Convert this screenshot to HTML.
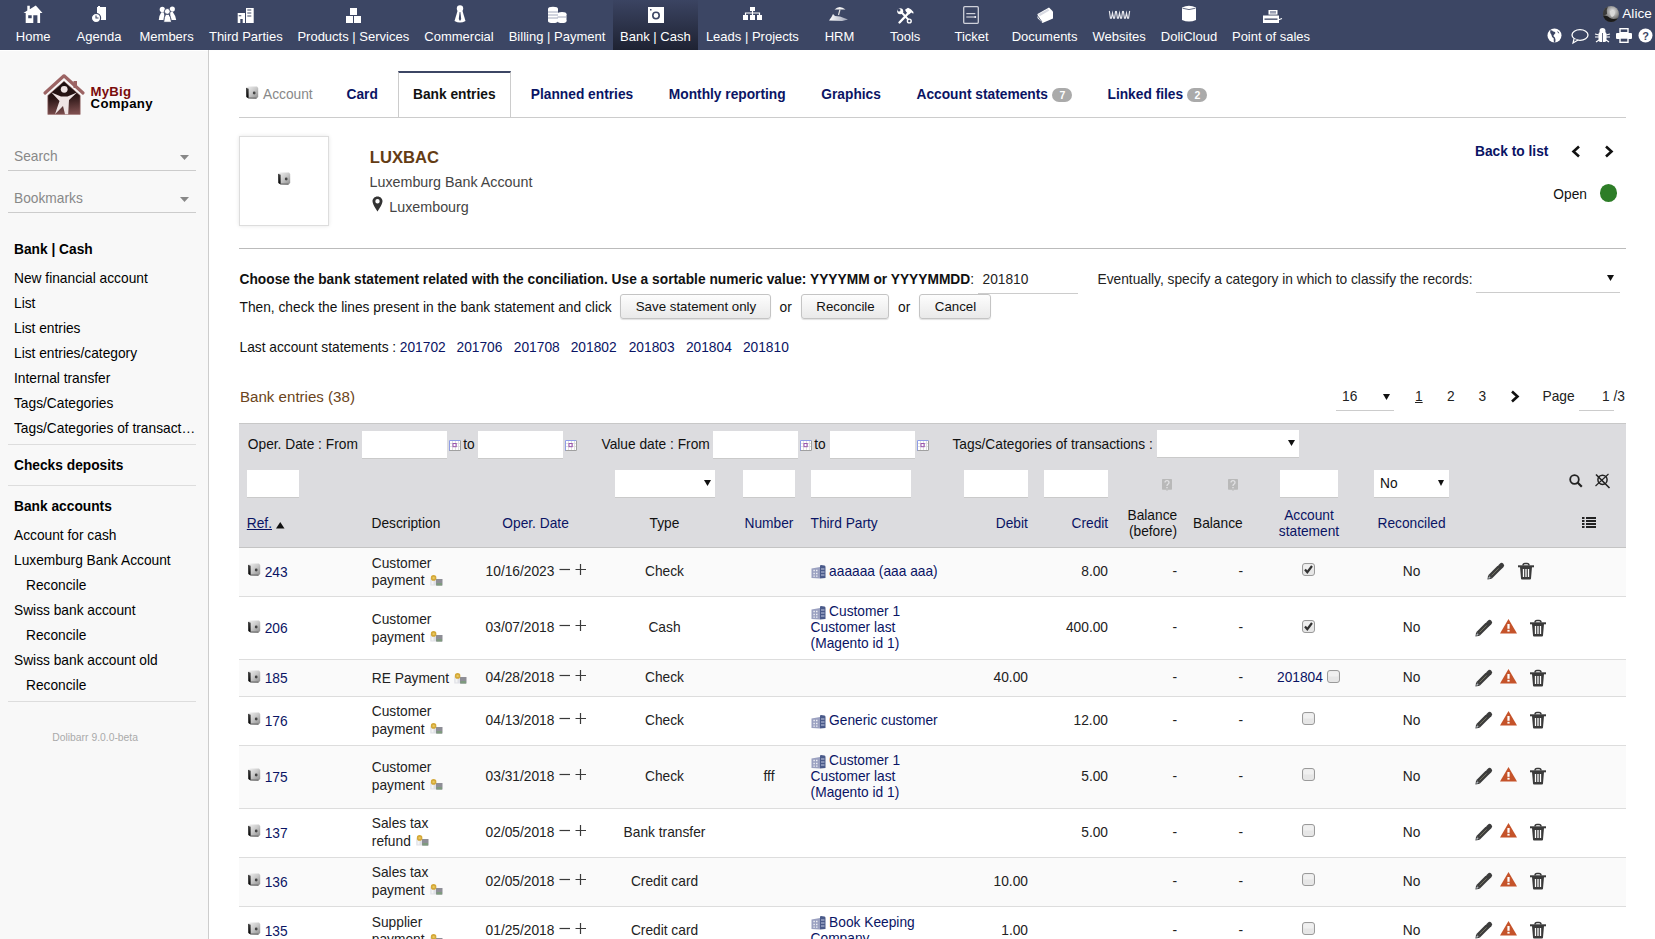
<!DOCTYPE html>
<html><head><meta charset="utf-8">
<style>
*{box-sizing:border-box}
html,body{margin:0;padding:0}
body{width:1655px;height:939px;overflow:hidden;position:relative;background:#fff;font-family:"Liberation Sans",sans-serif;font-size:13.76px;color:#222}
.a{position:absolute;white-space:nowrap;line-height:1}
svg.a{overflow:visible}
</style></head><body>

<div class="a" style="left:0px;top:0px;width:1655px;height:50px;background:#3c4664"></div>
<div class="a" style="left:613px;top:0px;width:85px;height:50px;background:linear-gradient(#3b4462,#1e2232)"></div>
<div class="a" style="left:-66.8px;width:200px;text-align:center;top:30.00px;font-size:13px;color:#fff">Home</div>
<div class="a" style="left:-1px;width:200px;text-align:center;top:30.00px;font-size:13px;color:#fff">Agenda</div>
<div class="a" style="left:66.6px;width:200px;text-align:center;top:30.00px;font-size:13px;color:#fff">Members</div>
<div class="a" style="left:145.8px;width:200px;text-align:center;top:30.00px;font-size:13px;color:#fff">Third Parties</div>
<div class="a" style="left:253.3px;width:200px;text-align:center;top:30.00px;font-size:13px;color:#fff">Products | Services</div>
<div class="a" style="left:359px;width:200px;text-align:center;top:30.00px;font-size:13px;color:#fff">Commercial</div>
<div class="a" style="left:457px;width:200px;text-align:center;top:30.00px;font-size:13px;color:#fff">Billing | Payment</div>
<div class="a" style="left:555.4px;width:200px;text-align:center;top:30.00px;font-size:13px;color:#fff">Bank | Cash</div>
<div class="a" style="left:652.4px;width:200px;text-align:center;top:30.00px;font-size:13px;color:#fff">Leads | Projects</div>
<div class="a" style="left:739.5px;width:200px;text-align:center;top:30.00px;font-size:13px;color:#fff">HRM</div>
<div class="a" style="left:805.2px;width:200px;text-align:center;top:30.00px;font-size:13px;color:#fff">Tools</div>
<div class="a" style="left:871.6px;width:200px;text-align:center;top:30.00px;font-size:13px;color:#fff">Ticket</div>
<div class="a" style="left:944.5999999999999px;width:200px;text-align:center;top:30.00px;font-size:13px;color:#fff">Documents</div>
<div class="a" style="left:1019.2px;width:200px;text-align:center;top:30.00px;font-size:13px;color:#fff">Websites</div>
<div class="a" style="left:1089px;width:200px;text-align:center;top:30.00px;font-size:13px;color:#fff">DoliCloud</div>
<div class="a" style="left:1171px;width:200px;text-align:center;top:30.00px;font-size:13px;color:#fff">Point of sales</div>
<svg class="a" style="left:23px;top:5px" width="20" height="19" viewBox="0 0 20 19"><path fill-rule="evenodd" fill="#fff" d="M0.5 8 L4.3 5.6 L4.3 0.8 L6.8 0.8 L6.8 4.2 L12.8 0.5 L19.5 8 L17.1 8 L17.1 18 L14.4 18 L14.4 10.3 L10.3 10.3 L10.3 18 L2.7 18 L2.7 8 Z M5.2 10.3 L8.7 10.3 L8.7 13.3 L5.2 13.3 Z"/></svg>
<svg class="a" style="left:91px;top:6px" width="16" height="17" viewBox="0 0 16 17"><rect x="6" y="1" width="9" height="13" fill="#fff"/><rect x="7" y="0" width="2" height="3" fill="#fff"/><circle cx="5" cy="12" r="4.6" fill="#fff" stroke="#3c4664" stroke-width="1.2"/><path d="M5 9.5 V12 H7.5" stroke="#3c4664" stroke-width="1.1" fill="none"/></svg>
<svg class="a" style="left:158px;top:6px" width="19" height="17" viewBox="0 0 19 17"><circle cx="4.3" cy="3.4" r="2.6" fill="#fff"/><path d="M0.8 14 Q1.3 9 3.3 6.3 L5.6 6.3 Q6.8 9 6.6 14 Z" fill="#fff"/><circle cx="14.3" cy="3.1" r="2.6" fill="#fff"/><path d="M12.2 6 L14.8 6 Q17.3 9 18.2 14 L12.3 14Z" fill="#fff"/><path d="M5.6 16.3 Q6 11 7.6 8.2 L11 8.2 Q12.8 11 13.6 16.3Z" fill="#fff" stroke="#3c4664" stroke-width="1"/><circle cx="9.3" cy="5.4" r="2.9" fill="#fff" stroke="#3c4664" stroke-width="0.9"/></svg>
<svg class="a" style="left:237px;top:7px" width="17" height="16" viewBox="0 0 17 16"><path fill-rule="evenodd" fill="#fff" d="M0.7 6 H8 V16 H5.7 V12 H3.3 V16 H0.7Z M1.7 8.3 H4.3 V9.3 H1.7Z"/><path fill-rule="evenodd" fill="#fff" d="M9 1 H16.7 V16 H9Z M10.3 2.5 H14.3 V3.5 H10.3Z M10.3 5.5 H14.3 V6.5 H10.3Z M10.3 8.5 H14.3 V9.5 H10.3Z"/></svg>
<svg class="a" style="left:345px;top:7px" width="18" height="17" viewBox="0 0 18 17"><rect x="5" y="1" width="7" height="7" fill="#fff"/><rect x="1" y="9" width="7" height="7" fill="#fff"/><rect x="9" y="9" width="7" height="7" fill="#fff"/></svg>
<svg class="a" style="left:454px;top:5px" width="12" height="18" viewBox="0 0 12 18"><circle cx="6" cy="3.5" r="3.2" fill="#fff"/><path d="M3.5 6 L8.5 6 L11.5 16 Q6 19 0.5 16 Z" fill="#fff"/><path d="M5.6 7 L6.4 7 L7.2 14 L6 16 L4.8 14Z" fill="#3c4664"/></svg>
<svg class="a" style="left:547px;top:6px" width="20" height="17" viewBox="0 0 20 17"><ellipse cx="6" cy="3" rx="5" ry="2.2" fill="#fff"/><rect x="1" y="3" width="10" height="12" fill="#fff"/><ellipse cx="6" cy="15" rx="5" ry="2" fill="#fff"/><ellipse cx="15" cy="8" rx="4.5" ry="2" fill="#fff"/><rect x="10.5" y="8" width="9" height="7" fill="#fff"/><ellipse cx="15" cy="15" rx="4.5" ry="2" fill="#fff"/><path d="M1 6H11M1 9H11M1 12H11M10.5 11H19.5" stroke="#8b93ab" stroke-width="0.8"/></svg>
<svg class="a" style="left:648px;top:7px" width="16" height="16" viewBox="0 0 16 16"><rect x="0" y="0" width="16" height="16" fill="#fff"/><circle cx="8" cy="8.5" r="3.2" fill="none" stroke="#3c4664" stroke-width="1.6"/><rect x="2" y="2" width="1.5" height="1.5" fill="#3c4664"/></svg>
<svg class="a" style="left:743px;top:7px" width="19" height="14" viewBox="0 0 19 14"><rect x="7" y="0" width="5" height="4" fill="#fff"/><rect x="0" y="8" width="5" height="5" fill="#fff"/><rect x="7" y="8" width="5" height="5" fill="#fff"/><rect x="14" y="8" width="5" height="5" fill="#fff"/><path d="M9.5 4 V8 M2.5 8 V6 H16.5 V8" stroke="#fff" stroke-width="1.2" fill="none"/></svg>
<svg class="a" style="left:829px;top:6px" width="20" height="15" viewBox="0 0 20 15"><defs><linearGradient id="hg" x1="0" y1="0" x2="1" y2="0"><stop offset="0" stop-color="#fff"/><stop offset="1" stop-color="#9aa0b4"/></linearGradient></defs><path d="M5.5 3.5 Q10.5 -1.5 16.5 3.5 Z" fill="#f4f4f4"/><path d="M11 3.5 L9.5 9" stroke="#e0e0e0" stroke-width="1.2"/><path d="M0 14.5 L2.5 11 L4 8 L6 10 L11 10.5 L19 13.5 L13 15 Z" fill="url(#hg)"/></svg>
<svg class="a" style="left:896px;top:7px" width="18" height="17" viewBox="0 0 18 17"><path d="M12.5 6 L3.5 15.5" stroke="#fff" stroke-width="2.4" stroke-linecap="round"/><path d="M9 2.8 L12 0.8 Q15 1.5 17.5 5 L17.3 6.8 L15.3 5.5 L13 7.6 L10.3 5 Z" fill="#fff"/><path d="M5.5 5.2 L12.3 12.6" stroke="#fff" stroke-width="2"/><circle cx="4.2" cy="4.2" r="3" fill="#fff"/><circle cx="3" cy="3" r="1.5" fill="#3c4664"/><path d="M1 1 L3.5 3.5" stroke="#3c4664" stroke-width="1.6"/><circle cx="13.3" cy="14" r="1.9" fill="none" stroke="#fff" stroke-width="1.4"/></svg>
<svg class="a" style="left:963px;top:6px" width="16" height="18" viewBox="0 0 16 18"><rect x="0.7" y="0.7" width="14.6" height="16.6" rx="1" fill="none" stroke="#cfd1da" stroke-width="1.3"/><rect x="3.3" y="7" width="9" height="1.2" fill="#cfd1da"/><rect x="3.3" y="10.4" width="9" height="1.2" fill="#cfd1da"/><rect x="11.5" y="10" width="1.6" height="2" fill="#e8e8ee"/></svg>
<svg class="a" style="left:1036px;top:6px" width="18" height="17" viewBox="0 0 18 17"><path d="M1.5 8 L13 1.5 L17 5.5 L17 12.5 L6.5 17 L1.5 12 Z" fill="#fff"/><path d="M2 8.5 L12 3 L13.5 4.5 L4 10Z" fill="#d8dae2"/><path d="M1 9 L6 16" stroke="#3c4664" stroke-width="0.8"/></svg>
<svg class="a" style="left:1109px;top:11px" width="21" height="7" viewBox="0 0 21 7"><path d="M0.5 0 L2 7 L3.5 7 L5 2 L6.5 7 L8 7 L9.5 0" fill="none" stroke="#e8e8ee" stroke-width="1.6" transform="scale(0.7,1)"/><g transform="translate(7,0)"><path d="M0.5 0 L2 7 L3.5 7 L5 2 L6.5 7 L8 7 L9.5 0" fill="none" stroke="#e8e8ee" stroke-width="1.6" transform="scale(0.7,1)"/></g><g transform="translate(14,0)"><path d="M0.5 0 L2 7 L3.5 7 L5 2 L6.5 7 L8 7 L9.5 0" fill="none" stroke="#e8e8ee" stroke-width="1.6" transform="scale(0.7,1)"/></g></svg>
<svg class="a" style="left:1182px;top:5px" width="14" height="17" viewBox="0 0 14 17"><path d="M0 2.5 Q7 -1 14 2.5 V15 Q7 18 0 15Z" fill="#fff"/><path d="M0.5 3.2 Q7 6 13.5 3.2" stroke="#3c4664" stroke-width="0.8" fill="none"/></svg>
<svg class="a" style="left:1262px;top:9px" width="21" height="15" viewBox="0 0 21 15"><rect x="6.5" y="1" width="9" height="4.6" fill="#fff"/><rect x="8" y="2" width="6" height="2.6" fill="#9aa0b4"/><rect x="1" y="6.5" width="16" height="7.5" fill="#fff"/><rect x="2.5" y="9.5" width="13" height="1.3" fill="#3c4664"/><path d="M16 11 L20 9.5" stroke="#fff" stroke-width="1.2"/></svg>
<svg class="a" style="left:1603px;top:6px" width="16" height="16" viewBox="0 0 16 16"><defs><clipPath id="av"><circle cx="8" cy="8" r="8"/></clipPath><radialGradient id="ag" cx="0.6" cy="0.35" r="0.6"><stop offset="0" stop-color="#f0f0f0"/><stop offset="0.5" stop-color="#a0a0a0"/><stop offset="1" stop-color="#505050"/></radialGradient></defs><g clip-path="url(#av)"><rect width="16" height="16" fill="url(#ag)"/><path d="M0 10 Q4 9 7 12 Q10 14 16 12 L16 16 L0 16Z" fill="#1a1a1a"/><path d="M0 0 L5 0 Q3 4 4 8 L0 10Z" fill="#3a3a3a"/><path d="M7 5 Q10 4 12 6 Q12 10 9 11 Q7 10 7 5Z" fill="#d8d8d8"/></g></svg>
<div class="a" style="left:1622.3px;top:6.74px;font-size:13.6px;font-weight:400;color:#fff;">Alice</div>
<svg class="a" style="left:1547px;top:28px" width="15" height="15" viewBox="0 0 15 15"><circle cx="7.5" cy="7.5" r="7" fill="#fff"/><path d="M3.2 2.2 Q5.5 2 6 3.5 Q8 3 8.5 5 Q7 6.5 6.3 8 Q8 9 8.4 11 Q8.8 13 8 14.5 L7 14.5 Q6.5 12 6.8 10.5 Q4.5 9 4.3 6.5 Q2.8 5 3.2 2.2Z" fill="#3c4664"/><path d="M10 3 Q12 3.5 12.3 5.5 Q11 5.5 10 3Z" fill="#3c4664"/></svg>
<svg class="a" style="left:1571px;top:29px" width="18" height="15" viewBox="0 0 18 15"><ellipse cx="9" cy="6" rx="8" ry="5.3" fill="none" stroke="#fff" stroke-width="1.3"/><path d="M3 10 L2 14 L7 11" fill="#3c4664" stroke="#fff" stroke-width="1.2"/></svg>
<svg class="a" style="left:1595px;top:28px" width="15" height="15" viewBox="0 0 15 15"><circle cx="7.5" cy="3" r="3" fill="#fff"/><rect x="3.5" y="4" width="8" height="10" rx="2" fill="#fff"/><path d="M0 6 L4 7 M15 6 L11 7 M0 9H4M11 9H15M1 14L4 12M14 14L11 12M7.5 5V14" stroke="#fff" stroke-width="1.2"/><path d="M7.5 5V14" stroke="#3c4664" stroke-width="0.8"/></svg>
<svg class="a" style="left:1616px;top:28px" width="16" height="15" viewBox="0 0 16 15"><rect x="4" y="0.7" width="8" height="4" fill="none" stroke="#fff" stroke-width="1.4"/><rect x="0" y="5" width="16" height="6" rx="1" fill="#fff"/><rect x="4" y="10" width="8" height="4.3" fill="#3c4664" stroke="#fff" stroke-width="1.4"/></svg>
<svg class="a" style="left:1638px;top:28px" width="15" height="15" viewBox="0 0 15 15"><circle cx="7.5" cy="7.5" r="7" fill="#fff"/><text x="7.5" y="12" text-anchor="middle" font-family="Liberation Sans" font-weight="bold" font-size="11" fill="#3c4664">?</text></svg>
<div class="a" style="left:0px;top:50px;width:208px;height:889px;background:#f8f8f8"></div>
<div class="a" style="left:208px;top:50px;width:1px;height:889px;background:#cdcdcd"></div>
<div class="a" style="left:0px;top:50px;width:208px;height:1px;background:#fff"></div>
<svg class="a" style="left:43px;top:74px" width="42" height="41" viewBox="0 0 42 41"><defs><linearGradient id="lg" x1="0.2" y1="0.1" x2="0.3" y2="1"><stop offset="0" stop-color="#1c1010"/><stop offset="0.45" stop-color="#2a1515"/><stop offset="1" stop-color="#7a4c4c"/></linearGradient></defs>
<path d="M2 19 L21 1.8 L40 19" stroke="#9c6464" stroke-width="3.2" fill="none" stroke-linecap="round" stroke-linejoin="round"/><rect x="30.5" y="7" width="3.5" height="7" fill="#9c6464"/>
<path d="M4.8 21.5 L21 7.3 L37.2 21.5 L37.2 40.4 L4.8 40.4Z" fill="url(#lg)" stroke="#a07070" stroke-width="0.6"/>
<circle cx="21.2" cy="15.3" r="3.4" fill="#efe4e4"/>
<path d="M8.5 18.5 L18 22.5 L24.5 22.5 L34 18.5 L26 26 L25.2 40.2 L22 40.2 L20 32 L12 40.2 L16.5 27 Z" fill="#efe4e4"/></svg>
<div class="a" style="left:90.6px;top:85.08px;font-size:13.2px;font-weight:700;color:#7a0c0c;letter-spacing:0.2px">MyBig</div>
<div class="a" style="left:90.6px;top:96.58px;font-size:13.2px;font-weight:700;color:#000;letter-spacing:0.3px">Company</div>
<div class="a" style="left:14px;top:149.60px;font-size:13.76px;font-weight:400;color:#888;">Search</div>
<svg class="a" style="left:180px;top:155px" width="9" height="5" viewBox="0 0 9 5"><path d="M0 0H9L4.5 5Z" fill="#888"/></svg>
<div class="a" style="left:8px;top:170px;width:188px;height:1px;background:#ccc"></div>
<div class="a" style="left:14px;top:191.60px;font-size:13.76px;font-weight:400;color:#888;">Bookmarks</div>
<svg class="a" style="left:180px;top:197px" width="9" height="5" viewBox="0 0 9 5"><path d="M0 0H9L4.5 5Z" fill="#888"/></svg>
<div class="a" style="left:8px;top:212px;width:188px;height:1px;background:#ccc"></div>
<div class="a" style="left:14px;top:242.60px;font-size:13.76px;font-weight:700;color:#000;">Bank | Cash</div>
<div class="a" style="left:14px;top:271.60px;font-size:13.76px;font-weight:400;color:#000;">New financial account</div>
<div class="a" style="left:14px;top:296.60px;font-size:13.76px;font-weight:400;color:#000;">List</div>
<div class="a" style="left:14px;top:321.60px;font-size:13.76px;font-weight:400;color:#000;">List entries</div>
<div class="a" style="left:14px;top:346.60px;font-size:13.76px;font-weight:400;color:#000;">List entries/category</div>
<div class="a" style="left:14px;top:371.60px;font-size:13.76px;font-weight:400;color:#000;">Internal transfer</div>
<div class="a" style="left:14px;top:396.60px;font-size:13.76px;font-weight:400;color:#000;">Tags/Categories</div>
<div class="a" style="left:14px;top:421.60px;font-size:13.76px;font-weight:400;color:#000;">Tags/Categories of transact…</div>
<div class="a" style="left:8px;top:444px;width:188px;height:1px;background:#ddd"></div>
<div class="a" style="left:14px;top:458.60px;font-size:13.76px;font-weight:700;color:#000;">Checks deposits</div>
<div class="a" style="left:8px;top:485px;width:188px;height:1px;background:#ddd"></div>
<div class="a" style="left:14px;top:500.10px;font-size:13.76px;font-weight:700;color:#000;">Bank accounts</div>
<div class="a" style="left:14px;top:528.60px;font-size:13.76px;font-weight:400;color:#000;">Account for cash</div>
<div class="a" style="left:14px;top:553.60px;font-size:13.76px;font-weight:400;color:#000;">Luxemburg Bank Account</div>
<div class="a" style="left:26px;top:578.60px;font-size:13.76px;font-weight:400;color:#000;">Reconcile</div>
<div class="a" style="left:14px;top:603.60px;font-size:13.76px;font-weight:400;color:#000;">Swiss bank account</div>
<div class="a" style="left:26px;top:628.60px;font-size:13.76px;font-weight:400;color:#000;">Reconcile</div>
<div class="a" style="left:14px;top:653.60px;font-size:13.76px;font-weight:400;color:#000;">Swiss bank account old</div>
<div class="a" style="left:26px;top:678.60px;font-size:13.76px;font-weight:400;color:#000;">Reconcile</div>
<div class="a" style="left:8px;top:701px;width:188px;height:1px;background:#ddd"></div>
<div class="a" style="left:52.3px;top:732.99px;font-size:10.35px;font-weight:400;color:#aaa;">Dolibarr 9.0.0-beta</div>
<svg class="a" style="left:246px;top:86px" width="13" height="13" viewBox="0 0 13 13"><defs><linearGradient id="cg" x1="0" y1="0" x2="1" y2="1"><stop offset="0" stop-color="#f2f2f2"/><stop offset="0.5" stop-color="#c8c8c8"/><stop offset="1" stop-color="#8a8a8a"/></linearGradient><linearGradient id="cl" x1="0" y1="0" x2="0" y2="1"><stop offset="0" stop-color="#444"/><stop offset="1" stop-color="#000"/></linearGradient></defs>
<path d="M0 1.8 L2 0.6 L11 0.6 L12.2 2 L12.2 11 L10.5 12.4 L3 12.6 L0.3 11Z" fill="url(#cg)"/><path d="M0 1.8 L2.6 2.8 L2.6 12.4 L0.3 11Z" fill="url(#cl)"/><path d="M2.6 12 L10.5 12.2" stroke="#555" stroke-width="0.9"/><circle cx="8.2" cy="7" r="1.4" fill="#444"/></svg>
<div class="a" style="left:263.0px;top:87.60px;font-size:13.76px;font-weight:400;color:#888;">Account</div>
<div class="a" style="left:346.5px;top:87.60px;font-size:13.76px;font-weight:700;color:#0a1464;">Card</div>
<div class="a" style="left:398px;top:71px;width:113px;height:47px;background:#fff;border:1px solid #ccc;border-bottom:none;border-top:2px solid #3c4664"></div>
<div class="a" style="left:413.0px;top:87.60px;font-size:13.76px;font-weight:700;color:#111;">Bank entries</div>
<div class="a" style="left:530.8px;top:87.60px;font-size:13.76px;font-weight:700;color:#0a1464;">Planned entries</div>
<div class="a" style="left:668.8px;top:87.60px;font-size:13.76px;font-weight:700;color:#0a1464;">Monthly reporting</div>
<div class="a" style="left:821.3px;top:87.60px;font-size:13.76px;font-weight:700;color:#0a1464;">Graphics</div>
<div class="a" style="left:916.5px;top:87.60px;font-size:13.76px;font-weight:700;color:#0a1464;">Account statements</div>
<div class="a" style="left:1052px;top:88px;width:20px;height:14px;background:#aaa;border-radius:7px"></div>
<div class="a" style="left:1052.5px;top:90.36px;font-size:10.5px;font-weight:700;color:#fff;width:20px;text-align:center">7</div>
<div class="a" style="left:1107.5px;top:87.60px;font-size:13.76px;font-weight:700;color:#0a1464;">Linked files</div>
<div class="a" style="left:1187px;top:88px;width:20px;height:14px;background:#aaa;border-radius:7px"></div>
<div class="a" style="left:1187.5px;top:90.36px;font-size:10.5px;font-weight:700;color:#fff;width:20px;text-align:center">2</div>
<div class="a" style="left:239px;top:117px;width:1387px;height:1px;background:#ccc"></div>
<div class="a" style="left:239px;top:136px;width:90px;height:90px;background:#fff;border:1px solid #ddd;box-shadow:0 0 4px rgba(0,0,0,0.10)"></div>
<svg class="a" style="left:278px;top:172px" width="13" height="13" viewBox="0 0 13 13"><defs><linearGradient id="cg" x1="0" y1="0" x2="1" y2="1"><stop offset="0" stop-color="#f2f2f2"/><stop offset="0.5" stop-color="#c8c8c8"/><stop offset="1" stop-color="#8a8a8a"/></linearGradient><linearGradient id="cl" x1="0" y1="0" x2="0" y2="1"><stop offset="0" stop-color="#444"/><stop offset="1" stop-color="#000"/></linearGradient></defs>
<path d="M0 1.8 L2 0.6 L11 0.6 L12.2 2 L12.2 11 L10.5 12.4 L3 12.6 L0.3 11Z" fill="url(#cg)"/><path d="M0 1.8 L2.6 2.8 L2.6 12.4 L0.3 11Z" fill="url(#cl)"/><path d="M2.6 12 L10.5 12.2" stroke="#555" stroke-width="0.9"/><circle cx="8.2" cy="7" r="1.4" fill="#444"/></svg>
<div class="a" style="left:369.8px;top:150.20px;font-size:16.6px;font-weight:700;color:#643c14;">LUXBAC</div>
<div class="a" style="left:369.5px;top:175.15px;font-size:14.3px;font-weight:400;color:#444;">Luxemburg Bank Account</div>
<svg class="a" style="left:372px;top:196px" width="11" height="16" viewBox="0 0 11 16"><path d="M5.5 0.5 C2.5 0.5 0.5 2.7 0.5 5.3 C0.5 8.5 5.5 15.5 5.5 15.5 C5.5 15.5 10.5 8.5 10.5 5.3 C10.5 2.7 8.5 0.5 5.5 0.5Z M5.5 3 A2.2 2.2 0 1 1 5.5 7.4 A2.2 2.2 0 1 1 5.5 3Z" fill="#333" fill-rule="evenodd"/></svg>
<div class="a" style="left:389.3px;top:200.15px;font-size:14.3px;font-weight:400;color:#444;">Luxembourg</div>
<div class="a" style="left:1475.0px;top:144.60px;font-size:13.76px;font-weight:700;color:#0a1464;">Back to list</div>
<svg class="a" style="left:1571px;top:145px" width="10" height="13" viewBox="0 0 10 13"><path d="M8 1.5 L2.5 6.5 L8 11.5" stroke="#111" stroke-width="2.6" fill="none"/></svg>
<svg class="a" style="left:1604px;top:145px" width="10" height="13" viewBox="0 0 10 13"><path d="M2 1.5 L7.5 6.5 L2 11.5" stroke="#111" stroke-width="2.6" fill="none"/></svg>
<div class="a" style="left:1553.3px;top:188.10px;font-size:13.76px;font-weight:400;color:#111;">Open</div>
<div class="a" style="left:1599.5px;top:184.3px;width:17px;height:17.5px;border-radius:50%;background:#2d7d27"></div>
<div class="a" style="left:239px;top:248px;width:1387px;height:1px;background:#bbb"></div>
<div class="a" style="left:239.5px;top:272.60px;font-size:13.76px;font-weight:400;color:#111;"><b>Choose the bank statement related with the conciliation. Use a sortable numeric value: YYYYMM or YYYYMMDD</b>: </div>
<div class="a" style="left:982.5px;top:272.60px;font-size:13.76px;font-weight:400;color:#222;">201810</div>
<div class="a" style="left:978px;top:293px;width:100px;height:1px;background:#ccc"></div>
<div class="a" style="left:1097.5px;top:272.60px;font-size:13.76px;font-weight:400;color:#222;">Eventually, specify a category in which to classify the records:</div>
<div class="a" style="left:1476px;top:292px;width:144px;height:1px;background:#ccc"></div>
<svg class="a" style="left:1607px;top:275px" width="7" height="6" viewBox="0 0 7 6"><path d="M0 0H7L3.5 6Z" fill="#111"/></svg>
<div class="a" style="left:239.5px;top:300.60px;font-size:13.76px;font-weight:400;color:#111;">Then, check the lines present in the bank statement and click</div>
<div class="a" style="left:620px;top:294px;width:151px;height:25px;border:1px solid #c4c4c4;border-radius:3px;background:linear-gradient(#fdfdfd,#e9e9e9);box-shadow:0 1px 1px rgba(0,0,0,0.12)"></div>
<div class="a" style="left:620.5px;top:300.49px;font-size:13.3px;font-weight:400;color:#111;width:151px;text-align:center">Save statement only</div>
<div class="a" style="left:779.5px;top:300.60px;font-size:13.76px;font-weight:400;color:#111;">or</div>
<div class="a" style="left:801px;top:294px;width:88px;height:25px;border:1px solid #c4c4c4;border-radius:3px;background:linear-gradient(#fdfdfd,#e9e9e9);box-shadow:0 1px 1px rgba(0,0,0,0.12)"></div>
<div class="a" style="left:801.5px;top:300.49px;font-size:13.3px;font-weight:400;color:#111;width:88px;text-align:center">Reconcile</div>
<div class="a" style="left:898.0px;top:300.60px;font-size:13.76px;font-weight:400;color:#111;">or</div>
<div class="a" style="left:919px;top:294px;width:72px;height:25px;border:1px solid #c4c4c4;border-radius:3px;background:linear-gradient(#fdfdfd,#e9e9e9);box-shadow:0 1px 1px rgba(0,0,0,0.12)"></div>
<div class="a" style="left:919.5px;top:300.49px;font-size:13.3px;font-weight:400;color:#111;width:72px;text-align:center">Cancel</div>
<div class="a" style="left:239.5px;top:341.10px;font-size:13.76px;font-weight:400;color:#111;">Last account statements : </div>
<div class="a" style="left:399.8px;top:341.10px;font-size:13.76px;font-weight:400;color:#0a1464;">201702</div>
<div class="a" style="left:456.5px;top:341.10px;font-size:13.76px;font-weight:400;color:#0a1464;">201706</div>
<div class="a" style="left:513.8px;top:341.10px;font-size:13.76px;font-weight:400;color:#0a1464;">201708</div>
<div class="a" style="left:570.7px;top:341.10px;font-size:13.76px;font-weight:400;color:#0a1464;">201802</div>
<div class="a" style="left:628.7px;top:341.10px;font-size:13.76px;font-weight:400;color:#0a1464;">201803</div>
<div class="a" style="left:685.9px;top:341.10px;font-size:13.76px;font-weight:400;color:#0a1464;">201804</div>
<div class="a" style="left:742.9px;top:341.10px;font-size:13.76px;font-weight:400;color:#0a1464;">201810</div>
<div class="a" style="left:240.0px;top:388.97px;font-size:15.1px;font-weight:400;color:#6b4420;">Bank entries (38)</div>
<div class="a" style="left:1342.0px;top:389.60px;font-size:13.76px;font-weight:400;color:#222;">16</div>
<svg class="a" style="left:1383px;top:394px" width="7" height="6" viewBox="0 0 7 6"><path d="M0 0H7L3.5 6Z" fill="#111"/></svg>
<div class="a" style="left:1336px;top:410px;width:58px;height:1px;background:#ccc"></div>
<div class="a" style="left:1415.0px;top:389.60px;font-size:13.76px;font-weight:400;color:#222;"><u>1</u></div>
<div class="a" style="left:1447.0px;top:389.60px;font-size:13.76px;font-weight:400;color:#222;">2</div>
<div class="a" style="left:1478.5px;top:389.60px;font-size:13.76px;font-weight:400;color:#222;">3</div>
<svg class="a" style="left:1510px;top:390px" width="10" height="13" viewBox="0 0 10 13"><path d="M2 1.5 L7.5 6.5 L2 11.5" stroke="#111" stroke-width="2.6" fill="none"/></svg>
<div class="a" style="left:1542.5px;top:389.60px;font-size:13.76px;font-weight:400;color:#222;">Page</div>
<div class="a" style="left:1579px;top:410px;width:35px;height:1px;background:#ccc"></div>
<div class="a" style="left:1602.0px;top:389.60px;font-size:13.76px;font-weight:400;color:#222;">1</div>
<div class="a" style="left:1613.5px;top:389.60px;font-size:13.76px;font-weight:400;color:#222;">/3</div>
<div class="a" style="left:239px;top:423px;width:1387px;height:125px;background:#dcdcdf;border-top:1px solid #c8c8c8;border-bottom:1px solid #c4c4c4"></div>
<div class="a" style="left:247.8px;top:437.60px;font-size:13.76px;font-weight:400;color:#111;">Oper. Date : From</div>
<div class="a" style="left:362px;top:431px;width:85px;height:28px;background:#fff;border-bottom:1px solid #cacaca;"></div>
<svg class="a" style="left:449px;top:440px" width="12" height="11" viewBox="0 0 12 11"><rect x="0" y="0" width="12" height="11" fill="#fff"/><path d="M3.5 0V11M6.5 0V11M9.5 0V11M0 3.5H12M0 6.5H12" stroke="#dcdcdc" stroke-width="0.9"/><path d="M0.5 11V0.5H11.5" stroke="#8e9ce6" stroke-width="1" fill="none"/><path d="M11.5 0.5V10.5H0.5" stroke="#a0a0a0" stroke-width="1" fill="none"/><rect x="4" y="3.5" width="3.2" height="3.2" fill="none" stroke="#9a55b0" stroke-width="1"/></svg>
<div class="a" style="left:463.3px;top:437.60px;font-size:13.76px;font-weight:400;color:#111;">to</div>
<div class="a" style="left:478px;top:431px;width:85px;height:28px;background:#fff;border-bottom:1px solid #cacaca;"></div>
<svg class="a" style="left:565px;top:440px" width="12" height="11" viewBox="0 0 12 11"><rect x="0" y="0" width="12" height="11" fill="#fff"/><path d="M3.5 0V11M6.5 0V11M9.5 0V11M0 3.5H12M0 6.5H12" stroke="#dcdcdc" stroke-width="0.9"/><path d="M0.5 11V0.5H11.5" stroke="#8e9ce6" stroke-width="1" fill="none"/><path d="M11.5 0.5V10.5H0.5" stroke="#a0a0a0" stroke-width="1" fill="none"/><rect x="4" y="3.5" width="3.2" height="3.2" fill="none" stroke="#9a55b0" stroke-width="1"/></svg>
<div class="a" style="left:601.5px;top:437.60px;font-size:13.76px;font-weight:400;color:#111;">Value date : From</div>
<div class="a" style="left:713px;top:431px;width:85px;height:28px;background:#fff;border-bottom:1px solid #cacaca;"></div>
<svg class="a" style="left:800px;top:440px" width="12" height="11" viewBox="0 0 12 11"><rect x="0" y="0" width="12" height="11" fill="#fff"/><path d="M3.5 0V11M6.5 0V11M9.5 0V11M0 3.5H12M0 6.5H12" stroke="#dcdcdc" stroke-width="0.9"/><path d="M0.5 11V0.5H11.5" stroke="#8e9ce6" stroke-width="1" fill="none"/><path d="M11.5 0.5V10.5H0.5" stroke="#a0a0a0" stroke-width="1" fill="none"/><rect x="4" y="3.5" width="3.2" height="3.2" fill="none" stroke="#9a55b0" stroke-width="1"/></svg>
<div class="a" style="left:814.3px;top:437.60px;font-size:13.76px;font-weight:400;color:#111;">to</div>
<div class="a" style="left:830px;top:431px;width:85px;height:28px;background:#fff;border-bottom:1px solid #cacaca;"></div>
<svg class="a" style="left:917px;top:440px" width="12" height="11" viewBox="0 0 12 11"><rect x="0" y="0" width="12" height="11" fill="#fff"/><path d="M3.5 0V11M6.5 0V11M9.5 0V11M0 3.5H12M0 6.5H12" stroke="#dcdcdc" stroke-width="0.9"/><path d="M0.5 11V0.5H11.5" stroke="#8e9ce6" stroke-width="1" fill="none"/><path d="M11.5 0.5V10.5H0.5" stroke="#a0a0a0" stroke-width="1" fill="none"/><rect x="4" y="3.5" width="3.2" height="3.2" fill="none" stroke="#9a55b0" stroke-width="1"/></svg>
<div class="a" style="left:952.5px;top:437.60px;font-size:13.76px;font-weight:400;color:#111;">Tags/Categories of transactions :</div>
<div class="a" style="left:1157px;top:430px;width:142px;height:28px;background:#fff;border-bottom:1px solid #cacaca;"></div>
<svg class="a" style="left:1288px;top:440px" width="7" height="7" viewBox="0 0 7 7"><path d="M0 0H7L3.5 6Z" fill="#111"/></svg>
<div class="a" style="left:247px;top:470px;width:52px;height:28px;background:#fff;border-bottom:1px solid #cacaca;"></div>
<div class="a" style="left:615px;top:470px;width:100px;height:28px;background:#fff;border-bottom:1px solid #cacaca;"></div>
<svg class="a" style="left:704px;top:480px" width="7" height="7" viewBox="0 0 7 7"><path d="M0 0H7L3.5 6Z" fill="#111"/></svg>
<div class="a" style="left:743px;top:470px;width:52px;height:28px;background:#fff;border-bottom:1px solid #cacaca;"></div>
<div class="a" style="left:811px;top:470px;width:100px;height:28px;background:#fff;border-bottom:1px solid #cacaca;"></div>
<div class="a" style="left:964px;top:470px;width:64px;height:28px;background:#fff;border-bottom:1px solid #cacaca;"></div>
<div class="a" style="left:1044px;top:470px;width:64px;height:28px;background:#fff;border-bottom:1px solid #cacaca;"></div>
<svg class="a" style="left:1162px;top:479px" width="10" height="12" viewBox="0 0 10 12"><rect x="0" y="0" width="10" height="10.8" rx="0.8" fill="#b9b9b9"/><path d="M4 10.8 L5 12 L6 10.8Z" fill="#b9b9b9"/><path d="M3 3.6 Q3 1.6 5 1.6 Q7 1.6 7 3.5 Q7 4.8 5.6 5.5 Q5 5.9 5 7" stroke="#e2e2e4" stroke-width="1.3" fill="none"/><rect x="4.3" y="8" width="1.4" height="1.3" fill="#e2e2e4"/></svg>
<svg class="a" style="left:1228px;top:479px" width="10" height="12" viewBox="0 0 10 12"><rect x="0" y="0" width="10" height="10.8" rx="0.8" fill="#b9b9b9"/><path d="M4 10.8 L5 12 L6 10.8Z" fill="#b9b9b9"/><path d="M3 3.6 Q3 1.6 5 1.6 Q7 1.6 7 3.5 Q7 4.8 5.6 5.5 Q5 5.9 5 7" stroke="#e2e2e4" stroke-width="1.3" fill="none"/><rect x="4.3" y="8" width="1.4" height="1.3" fill="#e2e2e4"/></svg>
<div class="a" style="left:1280px;top:470px;width:58px;height:28px;background:#fff;border-bottom:1px solid #cacaca;"></div>
<div class="a" style="left:1374px;top:470px;width:75px;height:28px;background:#fff;border-bottom:1px solid #cacaca;"></div>
<div class="a" style="left:1380.0px;top:476.90px;font-size:13.76px;font-weight:400;color:#111;">No</div>
<svg class="a" style="left:1438px;top:480px" width="6" height="6" viewBox="0 0 6 6"><path d="M0 0H6L3 6Z" fill="#111"/></svg>
<svg class="a" style="left:1569px;top:474px" width="14" height="14" viewBox="0 0 14 14"><circle cx="5.5" cy="5.5" r="4.3" fill="none" stroke="#222" stroke-width="1.8"/><path d="M8.5 8.5 L12.8 12.8" stroke="#222" stroke-width="2.2"/></svg>
<svg class="a" style="left:1595px;top:473px" width="16" height="16" viewBox="0 0 16 16"><circle cx="7.5" cy="6.8" r="4.6" fill="none" stroke="#222" stroke-width="1.5"/><path d="M1 1.5 L14.5 15" stroke="#222" stroke-width="1.6"/><path d="M0.5 13 L13.5 1" stroke="#222" stroke-width="1.1"/></svg>
<div class="a" style="left:246.8px;top:517.10px;font-size:13.76px;font-weight:400;color:#0a1464;"><u>Ref.</u></div>
<svg class="a" style="left:276px;top:521.5px" width="8.5" height="6.5" viewBox="0 0 8.5 6.5"><path d="M0 6.5H8.5L4.25 0Z" fill="#111"/></svg>
<div class="a" style="left:371.5px;top:517.10px;font-size:13.76px;font-weight:400;color:#111;">Description</div>
<div class="a" style="left:502.3px;top:517.10px;font-size:13.76px;font-weight:400;color:#0a1464;">Oper. Date</div>
<div class="a" style="left:649.5px;top:517.10px;font-size:13.76px;font-weight:400;color:#111;">Type</div>
<div class="a" style="left:744.5px;top:517.10px;font-size:13.76px;font-weight:400;color:#0a1464;">Number</div>
<div class="a" style="left:810.5px;top:517.10px;font-size:13.76px;font-weight:400;color:#0a1464;">Third Party</div>
<div class="a" style="left:995.8px;top:517.10px;font-size:13.76px;font-weight:400;color:#0a1464;">Debit</div>
<div class="a" style="left:1071.5px;top:517.10px;font-size:13.76px;font-weight:400;color:#0a1464;">Credit</div>
<div class="a" style="left:1127.5px;top:509.10px;font-size:13.76px;font-weight:400;color:#111;">Balance</div>
<div class="a" style="left:1127.5px;top:525.10px;font-size:13.76px;font-weight:400;color:#111;width:51px;text-align:center">(before)</div>
<div class="a" style="left:1193.0px;top:517.10px;font-size:13.76px;font-weight:400;color:#111;">Balance</div>
<div class="a" style="left:1278.5px;top:509.10px;font-size:13.76px;font-weight:400;color:#0a1464;width:61px;text-align:center">Account</div>
<div class="a" style="left:1278.5px;top:525.10px;font-size:13.76px;font-weight:400;color:#0a1464;width:61px;text-align:center">statement</div>
<div class="a" style="left:1377.5px;top:517.10px;font-size:13.76px;font-weight:400;color:#0a1464;">Reconciled</div>
<svg class="a" style="left:1582px;top:517px" width="14" height="11" viewBox="0 0 14 11"><path d="M0 1H2.5M0 4H2.5M0 7H2.5M0 10H2.5M4 1H14M4 4H14M4 7H14M4 10H14" stroke="#222" stroke-width="2"/></svg>
<div class="a" style="left:239px;top:548px;width:1387px;height:48px;background:#fafafa"></div>
<div class="a" style="left:239px;top:596px;width:1387px;height:1px;background:#ddd"></div>
<svg class="a" style="left:248px;top:563.2px" width="13" height="13" viewBox="0 0 13 13"><defs><linearGradient id="cg" x1="0" y1="0" x2="1" y2="1"><stop offset="0" stop-color="#f2f2f2"/><stop offset="0.5" stop-color="#c8c8c8"/><stop offset="1" stop-color="#8a8a8a"/></linearGradient><linearGradient id="cl" x1="0" y1="0" x2="0" y2="1"><stop offset="0" stop-color="#444"/><stop offset="1" stop-color="#000"/></linearGradient></defs>
<path d="M0 1.8 L2 0.6 L11 0.6 L12.2 2 L12.2 11 L10.5 12.4 L3 12.6 L0.3 11Z" fill="url(#cg)"/><path d="M0 1.8 L2.6 2.8 L2.6 12.4 L0.3 11Z" fill="url(#cl)"/><path d="M2.6 12 L10.5 12.2" stroke="#555" stroke-width="0.9"/><circle cx="8.2" cy="7" r="1.4" fill="#444"/></svg>
<div class="a" style="left:264.7px;top:565.60px;font-size:13.76px;font-weight:400;color:#0a1464;">243</div>
<div class="a" style="left:371.8px;top:556.60px;font-size:13.76px;font-weight:400;color:#222;">Customer</div>
<div class="a" style="left:371.8px;top:574.10px;font-size:13.76px;font-weight:400;color:#222;">payment</div>
<svg class="a" style="left:429.8px;top:574.5px" width="13" height="11" viewBox="0 0 13 11"><rect x="0.3" y="3.5" width="6" height="7" fill="#dfe0e6"/><rect x="6" y="4" width="6.5" height="6.5" fill="#8e8e96"/><rect x="6.5" y="8" width="5.5" height="2.5" fill="#7e9a7e"/><rect x="1.5" y="5.5" width="2" height="4" fill="#f4f4f4"/><circle cx="3.6" cy="2.9" r="2.8" fill="#d4a838"/><circle cx="3.6" cy="2.9" r="1.2" fill="#e8c860"/></svg>
<div class="a" style="left:485.6px;top:564.90px;font-size:13.76px;font-weight:400;color:#222;">10/16/2023</div>
<svg class="a" style="left:559px;top:563px" width="28" height="13" viewBox="0 0 28 13"><path d="M0.5 6.5 H11" stroke="#3a3a3a" stroke-width="1.2"/><path d="M16.5 6.5 H27 M21.5 1 V12" stroke="#3a3a3a" stroke-width="1.2"/></svg>
<div class="a" style="left:614px;top:564.90px;font-size:13.76px;font-weight:400;color:#222;width:101px;text-align:center">Check</div>
<svg class="a" style="left:810.6px;top:565px" width="14.5" height="14" viewBox="0 0 14.5 14"><path d="M0.5 3.5 L9 2 L9 13.5 L0.5 13 Z" fill="#9aa0c0"/><path d="M9 1 Q9 0 10 0 L13.5 0.5 Q14.5 0.8 14.5 2 L14.5 13 L9 13.5Z" fill="#4a5a8a"/><path d="M2.5 5.5h1.2M5.2 5.5h1.2M2.5 8.5h1.2M5.2 8.5h1.2M2.5 11.2h1.2M5.2 11.2h1.2" stroke="#fff" stroke-width="1.3"/><path d="M10 4h3.5M10 7h3.5M10 10h3.5" stroke="#c0c8e0" stroke-width="1"/></svg>
<div class="a" style="left:829.1px;top:564.60px;font-size:13.76px;font-weight:400;color:#0a1464;">aaaaaa (aaa aaa)</div>
<div class="a" style="left:1008px;top:564.90px;font-size:13.76px;font-weight:400;color:#222;width:100px;text-align:right">8.00</div>
<div class="a" style="left:1172.6px;top:564.90px;font-size:13.76px;font-weight:400;color:#222;">-</div>
<div class="a" style="left:1238.6px;top:564.90px;font-size:13.76px;font-weight:400;color:#222;">-</div>
<svg class="a" style="left:1302px;top:563px" width="13" height="13" viewBox="0 0 13 13"><rect x="0.5" y="0.5" width="12" height="12" rx="2.5" fill="#e6e6e6" stroke="#9a9a9a" stroke-width="1"/><rect x="1.5" y="1.5" width="10" height="5" rx="1.5" fill="#f0f0f0"/><path d="M3 6.5 L5.3 9.2 L10 3" stroke="#333" stroke-width="2.2" fill="none"/></svg>
<div class="a" style="left:1402.8px;top:564.90px;font-size:13.76px;font-weight:400;color:#222;">No</div>
<svg class="a" style="left:1487px;top:563px" width="17" height="17" viewBox="0 0 17 17"><path d="M3.2 13.8 L12.4 4.6" stroke="#3c3c3c" stroke-width="5"/><path d="M13.3 3.7 L14.6 2.4" stroke="#3c3c3c" stroke-width="5" stroke-linecap="round"/><path d="M0.4 16.6 L1.2 12 L5 15.8 Z" fill="#3c3c3c"/><path d="M1.6 15.4 L2.6 14.4" stroke="#e8f4ff" stroke-width="1.2"/><path d="M4.6 12.4 L11.6 5.4" stroke="#8a8a70" stroke-width="0.7"/></svg>
<svg class="a" style="left:1518px;top:563px" width="16" height="17" viewBox="0 0 16 17"><path d="M5 2.5 Q5 0.5 7 0.5 L9 0.5 Q11 0.5 11 2.5" stroke="#3a3a3a" stroke-width="1.5" fill="none"/><rect x="0" y="2.3" width="16" height="2" fill="#3a3a3a"/><path d="M2 4 L3 15.5 Q3 16.5 4 16.5 L12 16.5 Q13 16.5 13 15.5 L14 4 Z" fill="#3a3a3a"/><path d="M5.5 6 V14 M8 6 V14 M10.5 6 V14" stroke="#fff" stroke-width="1.3"/></svg>
<div class="a" style="left:239px;top:597px;width:1387px;height:62px;background:#fff"></div>
<div class="a" style="left:239px;top:659px;width:1387px;height:1px;background:#ddd"></div>
<svg class="a" style="left:248px;top:619.7px" width="13" height="13" viewBox="0 0 13 13"><defs><linearGradient id="cg" x1="0" y1="0" x2="1" y2="1"><stop offset="0" stop-color="#f2f2f2"/><stop offset="0.5" stop-color="#c8c8c8"/><stop offset="1" stop-color="#8a8a8a"/></linearGradient><linearGradient id="cl" x1="0" y1="0" x2="0" y2="1"><stop offset="0" stop-color="#444"/><stop offset="1" stop-color="#000"/></linearGradient></defs>
<path d="M0 1.8 L2 0.6 L11 0.6 L12.2 2 L12.2 11 L10.5 12.4 L3 12.6 L0.3 11Z" fill="url(#cg)"/><path d="M0 1.8 L2.6 2.8 L2.6 12.4 L0.3 11Z" fill="url(#cl)"/><path d="M2.6 12 L10.5 12.2" stroke="#555" stroke-width="0.9"/><circle cx="8.2" cy="7" r="1.4" fill="#444"/></svg>
<div class="a" style="left:264.7px;top:622.10px;font-size:13.76px;font-weight:400;color:#0a1464;">206</div>
<div class="a" style="left:371.8px;top:613.10px;font-size:13.76px;font-weight:400;color:#222;">Customer</div>
<div class="a" style="left:371.8px;top:630.60px;font-size:13.76px;font-weight:400;color:#222;">payment</div>
<svg class="a" style="left:429.8px;top:631.0px" width="13" height="11" viewBox="0 0 13 11"><rect x="0.3" y="3.5" width="6" height="7" fill="#dfe0e6"/><rect x="6" y="4" width="6.5" height="6.5" fill="#8e8e96"/><rect x="6.5" y="8" width="5.5" height="2.5" fill="#7e9a7e"/><rect x="1.5" y="5.5" width="2" height="4" fill="#f4f4f4"/><circle cx="3.6" cy="2.9" r="2.8" fill="#d4a838"/><circle cx="3.6" cy="2.9" r="1.2" fill="#e8c860"/></svg>
<div class="a" style="left:485.6px;top:621.40px;font-size:13.76px;font-weight:400;color:#222;">03/07/2018</div>
<svg class="a" style="left:559px;top:619px" width="28" height="13" viewBox="0 0 28 13"><path d="M0.5 6.5 H11" stroke="#3a3a3a" stroke-width="1.2"/><path d="M16.5 6.5 H27 M21.5 1 V12" stroke="#3a3a3a" stroke-width="1.2"/></svg>
<div class="a" style="left:614px;top:621.40px;font-size:13.76px;font-weight:400;color:#222;width:101px;text-align:center">Cash</div>
<svg class="a" style="left:810.6px;top:605.5px" width="14.5" height="14" viewBox="0 0 14.5 14"><path d="M0.5 3.5 L9 2 L9 13.5 L0.5 13 Z" fill="#9aa0c0"/><path d="M9 1 Q9 0 10 0 L13.5 0.5 Q14.5 0.8 14.5 2 L14.5 13 L9 13.5Z" fill="#4a5a8a"/><path d="M2.5 5.5h1.2M5.2 5.5h1.2M2.5 8.5h1.2M5.2 8.5h1.2M2.5 11.2h1.2M5.2 11.2h1.2" stroke="#fff" stroke-width="1.3"/><path d="M10 4h3.5M10 7h3.5M10 10h3.5" stroke="#c0c8e0" stroke-width="1"/></svg>
<div class="a" style="left:829.1px;top:605.10px;font-size:13.76px;font-weight:400;color:#0a1464;">Customer 1</div>
<div class="a" style="left:810.6px;top:621.10px;font-size:13.76px;font-weight:400;color:#0a1464;">Customer last</div>
<div class="a" style="left:810.6px;top:637.10px;font-size:13.76px;font-weight:400;color:#0a1464;">(Magento id 1)</div>
<div class="a" style="left:1008px;top:621.40px;font-size:13.76px;font-weight:400;color:#222;width:100px;text-align:right">400.00</div>
<div class="a" style="left:1172.6px;top:621.40px;font-size:13.76px;font-weight:400;color:#222;">-</div>
<div class="a" style="left:1238.6px;top:621.40px;font-size:13.76px;font-weight:400;color:#222;">-</div>
<svg class="a" style="left:1302px;top:619.5px" width="13" height="13" viewBox="0 0 13 13"><rect x="0.5" y="0.5" width="12" height="12" rx="2.5" fill="#e6e6e6" stroke="#9a9a9a" stroke-width="1"/><rect x="1.5" y="1.5" width="10" height="5" rx="1.5" fill="#f0f0f0"/><path d="M3 6.5 L5.3 9.2 L10 3" stroke="#333" stroke-width="2.2" fill="none"/></svg>
<div class="a" style="left:1402.8px;top:621.40px;font-size:13.76px;font-weight:400;color:#222;">No</div>
<svg class="a" style="left:1475px;top:619.5px" width="17" height="17" viewBox="0 0 17 17"><path d="M3.2 13.8 L12.4 4.6" stroke="#3c3c3c" stroke-width="5"/><path d="M13.3 3.7 L14.6 2.4" stroke="#3c3c3c" stroke-width="5" stroke-linecap="round"/><path d="M0.4 16.6 L1.2 12 L5 15.8 Z" fill="#3c3c3c"/><path d="M1.6 15.4 L2.6 14.4" stroke="#e8f4ff" stroke-width="1.2"/><path d="M4.6 12.4 L11.6 5.4" stroke="#8a8a70" stroke-width="0.7"/></svg>
<svg class="a" style="left:1499.5px;top:618.5px" width="17" height="15" viewBox="0 0 17 15"><path d="M8.5 0 L17 14.5 L0 14.5 Z" fill="#c5532a"/><rect x="7.4" y="5" width="2.2" height="4.8" fill="#fff"/><rect x="7.4" y="10.8" width="2.2" height="1.8" fill="#fff"/></svg>
<svg class="a" style="left:1530px;top:619.5px" width="16" height="17" viewBox="0 0 16 17"><path d="M5 2.5 Q5 0.5 7 0.5 L9 0.5 Q11 0.5 11 2.5" stroke="#3a3a3a" stroke-width="1.5" fill="none"/><rect x="0" y="2.3" width="16" height="2" fill="#3a3a3a"/><path d="M2 4 L3 15.5 Q3 16.5 4 16.5 L12 16.5 Q13 16.5 13 15.5 L14 4 Z" fill="#3a3a3a"/><path d="M5.5 6 V14 M8 6 V14 M10.5 6 V14" stroke="#fff" stroke-width="1.3"/></svg>
<div class="a" style="left:239px;top:660px;width:1387px;height:36px;background:#fafafa"></div>
<div class="a" style="left:239px;top:696px;width:1387px;height:1px;background:#ddd"></div>
<svg class="a" style="left:248px;top:669.7px" width="13" height="13" viewBox="0 0 13 13"><defs><linearGradient id="cg" x1="0" y1="0" x2="1" y2="1"><stop offset="0" stop-color="#f2f2f2"/><stop offset="0.5" stop-color="#c8c8c8"/><stop offset="1" stop-color="#8a8a8a"/></linearGradient><linearGradient id="cl" x1="0" y1="0" x2="0" y2="1"><stop offset="0" stop-color="#444"/><stop offset="1" stop-color="#000"/></linearGradient></defs>
<path d="M0 1.8 L2 0.6 L11 0.6 L12.2 2 L12.2 11 L10.5 12.4 L3 12.6 L0.3 11Z" fill="url(#cg)"/><path d="M0 1.8 L2.6 2.8 L2.6 12.4 L0.3 11Z" fill="url(#cl)"/><path d="M2.6 12 L10.5 12.2" stroke="#555" stroke-width="0.9"/><circle cx="8.2" cy="7" r="1.4" fill="#444"/></svg>
<div class="a" style="left:264.7px;top:672.10px;font-size:13.76px;font-weight:400;color:#0a1464;">185</div>
<div class="a" style="left:371.8px;top:672.10px;font-size:13.76px;font-weight:400;color:#222;">RE Payment</div>
<svg class="a" style="left:453.8px;top:672.5px" width="13" height="11" viewBox="0 0 13 11"><rect x="0.3" y="3.5" width="6" height="7" fill="#dfe0e6"/><rect x="6" y="4" width="6.5" height="6.5" fill="#8e8e96"/><rect x="6.5" y="8" width="5.5" height="2.5" fill="#7e9a7e"/><rect x="1.5" y="5.5" width="2" height="4" fill="#f4f4f4"/><circle cx="3.6" cy="2.9" r="2.8" fill="#d4a838"/><circle cx="3.6" cy="2.9" r="1.2" fill="#e8c860"/></svg>
<div class="a" style="left:485.6px;top:671.40px;font-size:13.76px;font-weight:400;color:#222;">04/28/2018</div>
<svg class="a" style="left:559px;top:669px" width="28" height="13" viewBox="0 0 28 13"><path d="M0.5 6.5 H11" stroke="#3a3a3a" stroke-width="1.2"/><path d="M16.5 6.5 H27 M21.5 1 V12" stroke="#3a3a3a" stroke-width="1.2"/></svg>
<div class="a" style="left:614px;top:671.40px;font-size:13.76px;font-weight:400;color:#222;width:101px;text-align:center">Check</div>
<div class="a" style="left:928px;top:671.40px;font-size:13.76px;font-weight:400;color:#222;width:100px;text-align:right">40.00</div>
<div class="a" style="left:1172.6px;top:671.40px;font-size:13.76px;font-weight:400;color:#222;">-</div>
<div class="a" style="left:1238.6px;top:671.40px;font-size:13.76px;font-weight:400;color:#222;">-</div>
<div class="a" style="left:1277px;top:671.40px;font-size:13.76px;font-weight:400;color:#0a1464;">201804</div>
<svg class="a" style="left:1327px;top:669.5px" width="13" height="13" viewBox="0 0 13 13"><rect x="0.5" y="0.5" width="12" height="12" rx="2.5" fill="#e6e6e6" stroke="#9a9a9a" stroke-width="1"/><rect x="1.5" y="1.5" width="10" height="5" rx="1.5" fill="#f0f0f0"/></svg>
<div class="a" style="left:1402.8px;top:671.40px;font-size:13.76px;font-weight:400;color:#222;">No</div>
<svg class="a" style="left:1475px;top:669.5px" width="17" height="17" viewBox="0 0 17 17"><path d="M3.2 13.8 L12.4 4.6" stroke="#3c3c3c" stroke-width="5"/><path d="M13.3 3.7 L14.6 2.4" stroke="#3c3c3c" stroke-width="5" stroke-linecap="round"/><path d="M0.4 16.6 L1.2 12 L5 15.8 Z" fill="#3c3c3c"/><path d="M1.6 15.4 L2.6 14.4" stroke="#e8f4ff" stroke-width="1.2"/><path d="M4.6 12.4 L11.6 5.4" stroke="#8a8a70" stroke-width="0.7"/></svg>
<svg class="a" style="left:1499.5px;top:668.5px" width="17" height="15" viewBox="0 0 17 15"><path d="M8.5 0 L17 14.5 L0 14.5 Z" fill="#c5532a"/><rect x="7.4" y="5" width="2.2" height="4.8" fill="#fff"/><rect x="7.4" y="10.8" width="2.2" height="1.8" fill="#fff"/></svg>
<svg class="a" style="left:1530px;top:669.5px" width="16" height="17" viewBox="0 0 16 17"><path d="M5 2.5 Q5 0.5 7 0.5 L9 0.5 Q11 0.5 11 2.5" stroke="#3a3a3a" stroke-width="1.5" fill="none"/><rect x="0" y="2.3" width="16" height="2" fill="#3a3a3a"/><path d="M2 4 L3 15.5 Q3 16.5 4 16.5 L12 16.5 Q13 16.5 13 15.5 L14 4 Z" fill="#3a3a3a"/><path d="M5.5 6 V14 M8 6 V14 M10.5 6 V14" stroke="#fff" stroke-width="1.3"/></svg>
<div class="a" style="left:239px;top:697px;width:1387px;height:48px;background:#fff"></div>
<div class="a" style="left:239px;top:745px;width:1387px;height:1px;background:#ddd"></div>
<svg class="a" style="left:248px;top:712.2px" width="13" height="13" viewBox="0 0 13 13"><defs><linearGradient id="cg" x1="0" y1="0" x2="1" y2="1"><stop offset="0" stop-color="#f2f2f2"/><stop offset="0.5" stop-color="#c8c8c8"/><stop offset="1" stop-color="#8a8a8a"/></linearGradient><linearGradient id="cl" x1="0" y1="0" x2="0" y2="1"><stop offset="0" stop-color="#444"/><stop offset="1" stop-color="#000"/></linearGradient></defs>
<path d="M0 1.8 L2 0.6 L11 0.6 L12.2 2 L12.2 11 L10.5 12.4 L3 12.6 L0.3 11Z" fill="url(#cg)"/><path d="M0 1.8 L2.6 2.8 L2.6 12.4 L0.3 11Z" fill="url(#cl)"/><path d="M2.6 12 L10.5 12.2" stroke="#555" stroke-width="0.9"/><circle cx="8.2" cy="7" r="1.4" fill="#444"/></svg>
<div class="a" style="left:264.7px;top:714.60px;font-size:13.76px;font-weight:400;color:#0a1464;">176</div>
<div class="a" style="left:371.8px;top:705.10px;font-size:13.76px;font-weight:400;color:#222;">Customer</div>
<div class="a" style="left:371.8px;top:722.60px;font-size:13.76px;font-weight:400;color:#222;">payment</div>
<svg class="a" style="left:429.8px;top:723.0px" width="13" height="11" viewBox="0 0 13 11"><rect x="0.3" y="3.5" width="6" height="7" fill="#dfe0e6"/><rect x="6" y="4" width="6.5" height="6.5" fill="#8e8e96"/><rect x="6.5" y="8" width="5.5" height="2.5" fill="#7e9a7e"/><rect x="1.5" y="5.5" width="2" height="4" fill="#f4f4f4"/><circle cx="3.6" cy="2.9" r="2.8" fill="#d4a838"/><circle cx="3.6" cy="2.9" r="1.2" fill="#e8c860"/></svg>
<div class="a" style="left:485.6px;top:713.90px;font-size:13.76px;font-weight:400;color:#222;">04/13/2018</div>
<svg class="a" style="left:559px;top:712px" width="28" height="13" viewBox="0 0 28 13"><path d="M0.5 6.5 H11" stroke="#3a3a3a" stroke-width="1.2"/><path d="M16.5 6.5 H27 M21.5 1 V12" stroke="#3a3a3a" stroke-width="1.2"/></svg>
<div class="a" style="left:614px;top:713.90px;font-size:13.76px;font-weight:400;color:#222;width:101px;text-align:center">Check</div>
<svg class="a" style="left:810.6px;top:714.5px" width="14.5" height="14" viewBox="0 0 14.5 14"><path d="M0.5 3.5 L9 2 L9 13.5 L0.5 13 Z" fill="#9aa0c0"/><path d="M9 1 Q9 0 10 0 L13.5 0.5 Q14.5 0.8 14.5 2 L14.5 13 L9 13.5Z" fill="#4a5a8a"/><path d="M2.5 5.5h1.2M5.2 5.5h1.2M2.5 8.5h1.2M5.2 8.5h1.2M2.5 11.2h1.2M5.2 11.2h1.2" stroke="#fff" stroke-width="1.3"/><path d="M10 4h3.5M10 7h3.5M10 10h3.5" stroke="#c0c8e0" stroke-width="1"/></svg>
<div class="a" style="left:829.1px;top:714.10px;font-size:13.76px;font-weight:400;color:#0a1464;">Generic customer</div>
<div class="a" style="left:1008px;top:713.90px;font-size:13.76px;font-weight:400;color:#222;width:100px;text-align:right">12.00</div>
<div class="a" style="left:1172.6px;top:713.90px;font-size:13.76px;font-weight:400;color:#222;">-</div>
<div class="a" style="left:1238.6px;top:713.90px;font-size:13.76px;font-weight:400;color:#222;">-</div>
<svg class="a" style="left:1302px;top:712px" width="13" height="13" viewBox="0 0 13 13"><rect x="0.5" y="0.5" width="12" height="12" rx="2.5" fill="#e6e6e6" stroke="#9a9a9a" stroke-width="1"/><rect x="1.5" y="1.5" width="10" height="5" rx="1.5" fill="#f0f0f0"/></svg>
<div class="a" style="left:1402.8px;top:713.90px;font-size:13.76px;font-weight:400;color:#222;">No</div>
<svg class="a" style="left:1475px;top:712px" width="17" height="17" viewBox="0 0 17 17"><path d="M3.2 13.8 L12.4 4.6" stroke="#3c3c3c" stroke-width="5"/><path d="M13.3 3.7 L14.6 2.4" stroke="#3c3c3c" stroke-width="5" stroke-linecap="round"/><path d="M0.4 16.6 L1.2 12 L5 15.8 Z" fill="#3c3c3c"/><path d="M1.6 15.4 L2.6 14.4" stroke="#e8f4ff" stroke-width="1.2"/><path d="M4.6 12.4 L11.6 5.4" stroke="#8a8a70" stroke-width="0.7"/></svg>
<svg class="a" style="left:1499.5px;top:711px" width="17" height="15" viewBox="0 0 17 15"><path d="M8.5 0 L17 14.5 L0 14.5 Z" fill="#c5532a"/><rect x="7.4" y="5" width="2.2" height="4.8" fill="#fff"/><rect x="7.4" y="10.8" width="2.2" height="1.8" fill="#fff"/></svg>
<svg class="a" style="left:1530px;top:712px" width="16" height="17" viewBox="0 0 16 17"><path d="M5 2.5 Q5 0.5 7 0.5 L9 0.5 Q11 0.5 11 2.5" stroke="#3a3a3a" stroke-width="1.5" fill="none"/><rect x="0" y="2.3" width="16" height="2" fill="#3a3a3a"/><path d="M2 4 L3 15.5 Q3 16.5 4 16.5 L12 16.5 Q13 16.5 13 15.5 L14 4 Z" fill="#3a3a3a"/><path d="M5.5 6 V14 M8 6 V14 M10.5 6 V14" stroke="#fff" stroke-width="1.3"/></svg>
<div class="a" style="left:239px;top:746px;width:1387px;height:62px;background:#fafafa"></div>
<div class="a" style="left:239px;top:808px;width:1387px;height:1px;background:#ddd"></div>
<svg class="a" style="left:248px;top:768.2px" width="13" height="13" viewBox="0 0 13 13"><defs><linearGradient id="cg" x1="0" y1="0" x2="1" y2="1"><stop offset="0" stop-color="#f2f2f2"/><stop offset="0.5" stop-color="#c8c8c8"/><stop offset="1" stop-color="#8a8a8a"/></linearGradient><linearGradient id="cl" x1="0" y1="0" x2="0" y2="1"><stop offset="0" stop-color="#444"/><stop offset="1" stop-color="#000"/></linearGradient></defs>
<path d="M0 1.8 L2 0.6 L11 0.6 L12.2 2 L12.2 11 L10.5 12.4 L3 12.6 L0.3 11Z" fill="url(#cg)"/><path d="M0 1.8 L2.6 2.8 L2.6 12.4 L0.3 11Z" fill="url(#cl)"/><path d="M2.6 12 L10.5 12.2" stroke="#555" stroke-width="0.9"/><circle cx="8.2" cy="7" r="1.4" fill="#444"/></svg>
<div class="a" style="left:264.7px;top:770.60px;font-size:13.76px;font-weight:400;color:#0a1464;">175</div>
<div class="a" style="left:371.8px;top:761.10px;font-size:13.76px;font-weight:400;color:#222;">Customer</div>
<div class="a" style="left:371.8px;top:778.60px;font-size:13.76px;font-weight:400;color:#222;">payment</div>
<svg class="a" style="left:429.8px;top:779.0px" width="13" height="11" viewBox="0 0 13 11"><rect x="0.3" y="3.5" width="6" height="7" fill="#dfe0e6"/><rect x="6" y="4" width="6.5" height="6.5" fill="#8e8e96"/><rect x="6.5" y="8" width="5.5" height="2.5" fill="#7e9a7e"/><rect x="1.5" y="5.5" width="2" height="4" fill="#f4f4f4"/><circle cx="3.6" cy="2.9" r="2.8" fill="#d4a838"/><circle cx="3.6" cy="2.9" r="1.2" fill="#e8c860"/></svg>
<div class="a" style="left:485.6px;top:769.90px;font-size:13.76px;font-weight:400;color:#222;">03/31/2018</div>
<svg class="a" style="left:559px;top:768px" width="28" height="13" viewBox="0 0 28 13"><path d="M0.5 6.5 H11" stroke="#3a3a3a" stroke-width="1.2"/><path d="M16.5 6.5 H27 M21.5 1 V12" stroke="#3a3a3a" stroke-width="1.2"/></svg>
<div class="a" style="left:614px;top:769.90px;font-size:13.76px;font-weight:400;color:#222;width:101px;text-align:center">Check</div>
<div class="a" style="left:743px;top:769.90px;font-size:13.76px;font-weight:400;color:#222;width:52px;text-align:center">fff</div>
<svg class="a" style="left:810.6px;top:754.5px" width="14.5" height="14" viewBox="0 0 14.5 14"><path d="M0.5 3.5 L9 2 L9 13.5 L0.5 13 Z" fill="#9aa0c0"/><path d="M9 1 Q9 0 10 0 L13.5 0.5 Q14.5 0.8 14.5 2 L14.5 13 L9 13.5Z" fill="#4a5a8a"/><path d="M2.5 5.5h1.2M5.2 5.5h1.2M2.5 8.5h1.2M5.2 8.5h1.2M2.5 11.2h1.2M5.2 11.2h1.2" stroke="#fff" stroke-width="1.3"/><path d="M10 4h3.5M10 7h3.5M10 10h3.5" stroke="#c0c8e0" stroke-width="1"/></svg>
<div class="a" style="left:829.1px;top:754.10px;font-size:13.76px;font-weight:400;color:#0a1464;">Customer 1</div>
<div class="a" style="left:810.6px;top:770.10px;font-size:13.76px;font-weight:400;color:#0a1464;">Customer last</div>
<div class="a" style="left:810.6px;top:786.10px;font-size:13.76px;font-weight:400;color:#0a1464;">(Magento id 1)</div>
<div class="a" style="left:1008px;top:769.90px;font-size:13.76px;font-weight:400;color:#222;width:100px;text-align:right">5.00</div>
<div class="a" style="left:1172.6px;top:769.90px;font-size:13.76px;font-weight:400;color:#222;">-</div>
<div class="a" style="left:1238.6px;top:769.90px;font-size:13.76px;font-weight:400;color:#222;">-</div>
<svg class="a" style="left:1302px;top:768px" width="13" height="13" viewBox="0 0 13 13"><rect x="0.5" y="0.5" width="12" height="12" rx="2.5" fill="#e6e6e6" stroke="#9a9a9a" stroke-width="1"/><rect x="1.5" y="1.5" width="10" height="5" rx="1.5" fill="#f0f0f0"/></svg>
<div class="a" style="left:1402.8px;top:769.90px;font-size:13.76px;font-weight:400;color:#222;">No</div>
<svg class="a" style="left:1475px;top:768px" width="17" height="17" viewBox="0 0 17 17"><path d="M3.2 13.8 L12.4 4.6" stroke="#3c3c3c" stroke-width="5"/><path d="M13.3 3.7 L14.6 2.4" stroke="#3c3c3c" stroke-width="5" stroke-linecap="round"/><path d="M0.4 16.6 L1.2 12 L5 15.8 Z" fill="#3c3c3c"/><path d="M1.6 15.4 L2.6 14.4" stroke="#e8f4ff" stroke-width="1.2"/><path d="M4.6 12.4 L11.6 5.4" stroke="#8a8a70" stroke-width="0.7"/></svg>
<svg class="a" style="left:1499.5px;top:767px" width="17" height="15" viewBox="0 0 17 15"><path d="M8.5 0 L17 14.5 L0 14.5 Z" fill="#c5532a"/><rect x="7.4" y="5" width="2.2" height="4.8" fill="#fff"/><rect x="7.4" y="10.8" width="2.2" height="1.8" fill="#fff"/></svg>
<svg class="a" style="left:1530px;top:768px" width="16" height="17" viewBox="0 0 16 17"><path d="M5 2.5 Q5 0.5 7 0.5 L9 0.5 Q11 0.5 11 2.5" stroke="#3a3a3a" stroke-width="1.5" fill="none"/><rect x="0" y="2.3" width="16" height="2" fill="#3a3a3a"/><path d="M2 4 L3 15.5 Q3 16.5 4 16.5 L12 16.5 Q13 16.5 13 15.5 L14 4 Z" fill="#3a3a3a"/><path d="M5.5 6 V14 M8 6 V14 M10.5 6 V14" stroke="#fff" stroke-width="1.3"/></svg>
<div class="a" style="left:239px;top:809px;width:1387px;height:48px;background:#fff"></div>
<div class="a" style="left:239px;top:857px;width:1387px;height:1px;background:#ddd"></div>
<svg class="a" style="left:248px;top:824.2px" width="13" height="13" viewBox="0 0 13 13"><defs><linearGradient id="cg" x1="0" y1="0" x2="1" y2="1"><stop offset="0" stop-color="#f2f2f2"/><stop offset="0.5" stop-color="#c8c8c8"/><stop offset="1" stop-color="#8a8a8a"/></linearGradient><linearGradient id="cl" x1="0" y1="0" x2="0" y2="1"><stop offset="0" stop-color="#444"/><stop offset="1" stop-color="#000"/></linearGradient></defs>
<path d="M0 1.8 L2 0.6 L11 0.6 L12.2 2 L12.2 11 L10.5 12.4 L3 12.6 L0.3 11Z" fill="url(#cg)"/><path d="M0 1.8 L2.6 2.8 L2.6 12.4 L0.3 11Z" fill="url(#cl)"/><path d="M2.6 12 L10.5 12.2" stroke="#555" stroke-width="0.9"/><circle cx="8.2" cy="7" r="1.4" fill="#444"/></svg>
<div class="a" style="left:264.7px;top:826.60px;font-size:13.76px;font-weight:400;color:#0a1464;">137</div>
<div class="a" style="left:371.8px;top:817.10px;font-size:13.76px;font-weight:400;color:#222;">Sales tax</div>
<div class="a" style="left:371.8px;top:834.60px;font-size:13.76px;font-weight:400;color:#222;">refund</div>
<svg class="a" style="left:416.40000000000003px;top:835.0px" width="13" height="11" viewBox="0 0 13 11"><rect x="0.3" y="3.5" width="6" height="7" fill="#dfe0e6"/><rect x="6" y="4" width="6.5" height="6.5" fill="#8e8e96"/><rect x="6.5" y="8" width="5.5" height="2.5" fill="#7e9a7e"/><rect x="1.5" y="5.5" width="2" height="4" fill="#f4f4f4"/><circle cx="3.6" cy="2.9" r="2.8" fill="#d4a838"/><circle cx="3.6" cy="2.9" r="1.2" fill="#e8c860"/></svg>
<div class="a" style="left:485.6px;top:825.90px;font-size:13.76px;font-weight:400;color:#222;">02/05/2018</div>
<svg class="a" style="left:559px;top:824px" width="28" height="13" viewBox="0 0 28 13"><path d="M0.5 6.5 H11" stroke="#3a3a3a" stroke-width="1.2"/><path d="M16.5 6.5 H27 M21.5 1 V12" stroke="#3a3a3a" stroke-width="1.2"/></svg>
<div class="a" style="left:614px;top:825.90px;font-size:13.76px;font-weight:400;color:#222;width:101px;text-align:center">Bank transfer</div>
<div class="a" style="left:1008px;top:825.90px;font-size:13.76px;font-weight:400;color:#222;width:100px;text-align:right">5.00</div>
<div class="a" style="left:1172.6px;top:825.90px;font-size:13.76px;font-weight:400;color:#222;">-</div>
<div class="a" style="left:1238.6px;top:825.90px;font-size:13.76px;font-weight:400;color:#222;">-</div>
<svg class="a" style="left:1302px;top:824px" width="13" height="13" viewBox="0 0 13 13"><rect x="0.5" y="0.5" width="12" height="12" rx="2.5" fill="#e6e6e6" stroke="#9a9a9a" stroke-width="1"/><rect x="1.5" y="1.5" width="10" height="5" rx="1.5" fill="#f0f0f0"/></svg>
<div class="a" style="left:1402.8px;top:825.90px;font-size:13.76px;font-weight:400;color:#222;">No</div>
<svg class="a" style="left:1475px;top:824px" width="17" height="17" viewBox="0 0 17 17"><path d="M3.2 13.8 L12.4 4.6" stroke="#3c3c3c" stroke-width="5"/><path d="M13.3 3.7 L14.6 2.4" stroke="#3c3c3c" stroke-width="5" stroke-linecap="round"/><path d="M0.4 16.6 L1.2 12 L5 15.8 Z" fill="#3c3c3c"/><path d="M1.6 15.4 L2.6 14.4" stroke="#e8f4ff" stroke-width="1.2"/><path d="M4.6 12.4 L11.6 5.4" stroke="#8a8a70" stroke-width="0.7"/></svg>
<svg class="a" style="left:1499.5px;top:823px" width="17" height="15" viewBox="0 0 17 15"><path d="M8.5 0 L17 14.5 L0 14.5 Z" fill="#c5532a"/><rect x="7.4" y="5" width="2.2" height="4.8" fill="#fff"/><rect x="7.4" y="10.8" width="2.2" height="1.8" fill="#fff"/></svg>
<svg class="a" style="left:1530px;top:824px" width="16" height="17" viewBox="0 0 16 17"><path d="M5 2.5 Q5 0.5 7 0.5 L9 0.5 Q11 0.5 11 2.5" stroke="#3a3a3a" stroke-width="1.5" fill="none"/><rect x="0" y="2.3" width="16" height="2" fill="#3a3a3a"/><path d="M2 4 L3 15.5 Q3 16.5 4 16.5 L12 16.5 Q13 16.5 13 15.5 L14 4 Z" fill="#3a3a3a"/><path d="M5.5 6 V14 M8 6 V14 M10.5 6 V14" stroke="#fff" stroke-width="1.3"/></svg>
<div class="a" style="left:239px;top:858px;width:1387px;height:48px;background:#fafafa"></div>
<div class="a" style="left:239px;top:906px;width:1387px;height:1px;background:#ddd"></div>
<svg class="a" style="left:248px;top:873.2px" width="13" height="13" viewBox="0 0 13 13"><defs><linearGradient id="cg" x1="0" y1="0" x2="1" y2="1"><stop offset="0" stop-color="#f2f2f2"/><stop offset="0.5" stop-color="#c8c8c8"/><stop offset="1" stop-color="#8a8a8a"/></linearGradient><linearGradient id="cl" x1="0" y1="0" x2="0" y2="1"><stop offset="0" stop-color="#444"/><stop offset="1" stop-color="#000"/></linearGradient></defs>
<path d="M0 1.8 L2 0.6 L11 0.6 L12.2 2 L12.2 11 L10.5 12.4 L3 12.6 L0.3 11Z" fill="url(#cg)"/><path d="M0 1.8 L2.6 2.8 L2.6 12.4 L0.3 11Z" fill="url(#cl)"/><path d="M2.6 12 L10.5 12.2" stroke="#555" stroke-width="0.9"/><circle cx="8.2" cy="7" r="1.4" fill="#444"/></svg>
<div class="a" style="left:264.7px;top:875.60px;font-size:13.76px;font-weight:400;color:#0a1464;">136</div>
<div class="a" style="left:371.8px;top:866.10px;font-size:13.76px;font-weight:400;color:#222;">Sales tax</div>
<div class="a" style="left:371.8px;top:883.60px;font-size:13.76px;font-weight:400;color:#222;">payment</div>
<svg class="a" style="left:429.8px;top:884.0px" width="13" height="11" viewBox="0 0 13 11"><rect x="0.3" y="3.5" width="6" height="7" fill="#dfe0e6"/><rect x="6" y="4" width="6.5" height="6.5" fill="#8e8e96"/><rect x="6.5" y="8" width="5.5" height="2.5" fill="#7e9a7e"/><rect x="1.5" y="5.5" width="2" height="4" fill="#f4f4f4"/><circle cx="3.6" cy="2.9" r="2.8" fill="#d4a838"/><circle cx="3.6" cy="2.9" r="1.2" fill="#e8c860"/></svg>
<div class="a" style="left:485.6px;top:874.90px;font-size:13.76px;font-weight:400;color:#222;">02/05/2018</div>
<svg class="a" style="left:559px;top:873px" width="28" height="13" viewBox="0 0 28 13"><path d="M0.5 6.5 H11" stroke="#3a3a3a" stroke-width="1.2"/><path d="M16.5 6.5 H27 M21.5 1 V12" stroke="#3a3a3a" stroke-width="1.2"/></svg>
<div class="a" style="left:614px;top:874.90px;font-size:13.76px;font-weight:400;color:#222;width:101px;text-align:center">Credit card</div>
<div class="a" style="left:928px;top:874.90px;font-size:13.76px;font-weight:400;color:#222;width:100px;text-align:right">10.00</div>
<div class="a" style="left:1172.6px;top:874.90px;font-size:13.76px;font-weight:400;color:#222;">-</div>
<div class="a" style="left:1238.6px;top:874.90px;font-size:13.76px;font-weight:400;color:#222;">-</div>
<svg class="a" style="left:1302px;top:873px" width="13" height="13" viewBox="0 0 13 13"><rect x="0.5" y="0.5" width="12" height="12" rx="2.5" fill="#e6e6e6" stroke="#9a9a9a" stroke-width="1"/><rect x="1.5" y="1.5" width="10" height="5" rx="1.5" fill="#f0f0f0"/></svg>
<div class="a" style="left:1402.8px;top:874.90px;font-size:13.76px;font-weight:400;color:#222;">No</div>
<svg class="a" style="left:1475px;top:873px" width="17" height="17" viewBox="0 0 17 17"><path d="M3.2 13.8 L12.4 4.6" stroke="#3c3c3c" stroke-width="5"/><path d="M13.3 3.7 L14.6 2.4" stroke="#3c3c3c" stroke-width="5" stroke-linecap="round"/><path d="M0.4 16.6 L1.2 12 L5 15.8 Z" fill="#3c3c3c"/><path d="M1.6 15.4 L2.6 14.4" stroke="#e8f4ff" stroke-width="1.2"/><path d="M4.6 12.4 L11.6 5.4" stroke="#8a8a70" stroke-width="0.7"/></svg>
<svg class="a" style="left:1499.5px;top:872px" width="17" height="15" viewBox="0 0 17 15"><path d="M8.5 0 L17 14.5 L0 14.5 Z" fill="#c5532a"/><rect x="7.4" y="5" width="2.2" height="4.8" fill="#fff"/><rect x="7.4" y="10.8" width="2.2" height="1.8" fill="#fff"/></svg>
<svg class="a" style="left:1530px;top:873px" width="16" height="17" viewBox="0 0 16 17"><path d="M5 2.5 Q5 0.5 7 0.5 L9 0.5 Q11 0.5 11 2.5" stroke="#3a3a3a" stroke-width="1.5" fill="none"/><rect x="0" y="2.3" width="16" height="2" fill="#3a3a3a"/><path d="M2 4 L3 15.5 Q3 16.5 4 16.5 L12 16.5 Q13 16.5 13 15.5 L14 4 Z" fill="#3a3a3a"/><path d="M5.5 6 V14 M8 6 V14 M10.5 6 V14" stroke="#fff" stroke-width="1.3"/></svg>
<div class="a" style="left:239px;top:907px;width:1387px;height:53px;background:#fff"></div>
<div class="a" style="left:239px;top:960px;width:1387px;height:1px;background:#ddd"></div>
<svg class="a" style="left:248px;top:922.2px" width="13" height="13" viewBox="0 0 13 13"><defs><linearGradient id="cg" x1="0" y1="0" x2="1" y2="1"><stop offset="0" stop-color="#f2f2f2"/><stop offset="0.5" stop-color="#c8c8c8"/><stop offset="1" stop-color="#8a8a8a"/></linearGradient><linearGradient id="cl" x1="0" y1="0" x2="0" y2="1"><stop offset="0" stop-color="#444"/><stop offset="1" stop-color="#000"/></linearGradient></defs>
<path d="M0 1.8 L2 0.6 L11 0.6 L12.2 2 L12.2 11 L10.5 12.4 L3 12.6 L0.3 11Z" fill="url(#cg)"/><path d="M0 1.8 L2.6 2.8 L2.6 12.4 L0.3 11Z" fill="url(#cl)"/><path d="M2.6 12 L10.5 12.2" stroke="#555" stroke-width="0.9"/><circle cx="8.2" cy="7" r="1.4" fill="#444"/></svg>
<div class="a" style="left:264.7px;top:924.60px;font-size:13.76px;font-weight:400;color:#0a1464;">135</div>
<div class="a" style="left:371.8px;top:915.60px;font-size:13.76px;font-weight:400;color:#222;">Supplier</div>
<div class="a" style="left:371.8px;top:933.10px;font-size:13.76px;font-weight:400;color:#222;">payment</div>
<svg class="a" style="left:429.8px;top:933.5px" width="13" height="11" viewBox="0 0 13 11"><rect x="0.3" y="3.5" width="6" height="7" fill="#dfe0e6"/><rect x="6" y="4" width="6.5" height="6.5" fill="#8e8e96"/><rect x="6.5" y="8" width="5.5" height="2.5" fill="#7e9a7e"/><rect x="1.5" y="5.5" width="2" height="4" fill="#f4f4f4"/><circle cx="3.6" cy="2.9" r="2.8" fill="#d4a838"/><circle cx="3.6" cy="2.9" r="1.2" fill="#e8c860"/></svg>
<div class="a" style="left:485.6px;top:923.90px;font-size:13.76px;font-weight:400;color:#222;">01/25/2018</div>
<svg class="a" style="left:559px;top:922px" width="28" height="13" viewBox="0 0 28 13"><path d="M0.5 6.5 H11" stroke="#3a3a3a" stroke-width="1.2"/><path d="M16.5 6.5 H27 M21.5 1 V12" stroke="#3a3a3a" stroke-width="1.2"/></svg>
<div class="a" style="left:614px;top:923.90px;font-size:13.76px;font-weight:400;color:#222;width:101px;text-align:center">Credit card</div>
<svg class="a" style="left:810.6px;top:916px" width="14.5" height="14" viewBox="0 0 14.5 14"><path d="M0.5 3.5 L9 2 L9 13.5 L0.5 13 Z" fill="#9aa0c0"/><path d="M9 1 Q9 0 10 0 L13.5 0.5 Q14.5 0.8 14.5 2 L14.5 13 L9 13.5Z" fill="#4a5a8a"/><path d="M2.5 5.5h1.2M5.2 5.5h1.2M2.5 8.5h1.2M5.2 8.5h1.2M2.5 11.2h1.2M5.2 11.2h1.2" stroke="#fff" stroke-width="1.3"/><path d="M10 4h3.5M10 7h3.5M10 10h3.5" stroke="#c0c8e0" stroke-width="1"/></svg>
<div class="a" style="left:829.1px;top:915.60px;font-size:13.76px;font-weight:400;color:#0a1464;">Book Keeping</div>
<div class="a" style="left:810.6px;top:931.60px;font-size:13.76px;font-weight:400;color:#0a1464;">Company</div>
<div class="a" style="left:928px;top:923.90px;font-size:13.76px;font-weight:400;color:#222;width:100px;text-align:right">1.00</div>
<div class="a" style="left:1172.6px;top:923.90px;font-size:13.76px;font-weight:400;color:#222;">-</div>
<div class="a" style="left:1238.6px;top:923.90px;font-size:13.76px;font-weight:400;color:#222;">-</div>
<svg class="a" style="left:1302px;top:922px" width="13" height="13" viewBox="0 0 13 13"><rect x="0.5" y="0.5" width="12" height="12" rx="2.5" fill="#e6e6e6" stroke="#9a9a9a" stroke-width="1"/><rect x="1.5" y="1.5" width="10" height="5" rx="1.5" fill="#f0f0f0"/></svg>
<div class="a" style="left:1402.8px;top:923.90px;font-size:13.76px;font-weight:400;color:#222;">No</div>
<svg class="a" style="left:1475px;top:922px" width="17" height="17" viewBox="0 0 17 17"><path d="M3.2 13.8 L12.4 4.6" stroke="#3c3c3c" stroke-width="5"/><path d="M13.3 3.7 L14.6 2.4" stroke="#3c3c3c" stroke-width="5" stroke-linecap="round"/><path d="M0.4 16.6 L1.2 12 L5 15.8 Z" fill="#3c3c3c"/><path d="M1.6 15.4 L2.6 14.4" stroke="#e8f4ff" stroke-width="1.2"/><path d="M4.6 12.4 L11.6 5.4" stroke="#8a8a70" stroke-width="0.7"/></svg>
<svg class="a" style="left:1499.5px;top:921px" width="17" height="15" viewBox="0 0 17 15"><path d="M8.5 0 L17 14.5 L0 14.5 Z" fill="#c5532a"/><rect x="7.4" y="5" width="2.2" height="4.8" fill="#fff"/><rect x="7.4" y="10.8" width="2.2" height="1.8" fill="#fff"/></svg>
<svg class="a" style="left:1530px;top:922px" width="16" height="17" viewBox="0 0 16 17"><path d="M5 2.5 Q5 0.5 7 0.5 L9 0.5 Q11 0.5 11 2.5" stroke="#3a3a3a" stroke-width="1.5" fill="none"/><rect x="0" y="2.3" width="16" height="2" fill="#3a3a3a"/><path d="M2 4 L3 15.5 Q3 16.5 4 16.5 L12 16.5 Q13 16.5 13 15.5 L14 4 Z" fill="#3a3a3a"/><path d="M5.5 6 V14 M8 6 V14 M10.5 6 V14" stroke="#fff" stroke-width="1.3"/></svg>
</body></html>
